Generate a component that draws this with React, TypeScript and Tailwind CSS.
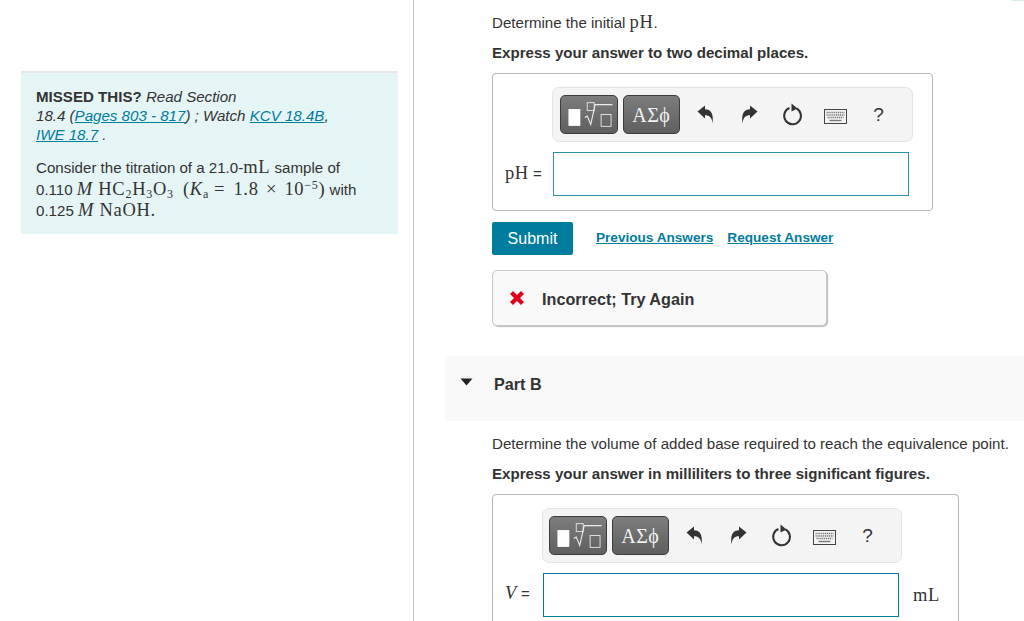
const sans = "font-['Liberation_Sans',Arial,sans-serif]";
const serif = "font-['Liberation_Serif','Times_New_Roman',serif]";

const TemplatesIcon = () => (
  <svg width="56" height="37" viewBox="0 0 56 37" fill="none">
    <rect x="7.5" y="13" width="12" height="17" fill="#fff" />
    <rect x="26.5" y="6.5" width="7" height="8" stroke="#dcdcdc" />
    <path d="M24 21.5l2.5 -1.5 3.5 8.5 4.5-20h17.5" stroke="#ededed" strokeWidth="1.1" />
    <rect x="40.5" y="18.5" width="10" height="12" stroke="#dcdcdc" />
  </svg>
);

const UndoIcon = ({ flip = false }: { flip?: boolean }) => (
  <svg width="17" height="19" viewBox="0 0 17 19" className={flip ? "-scale-x-100" : ""}>
    <path
      d="M0.5 6.5L8 0.5V4.2C13.5 4.2 17 8 15.5 18.5C15 12.5 12.5 10.2 8 10.2V13.5Z"
      fill="#333"
    />
  </svg>
);

const ResetIcon = () => (
  <svg width="21" height="23" viewBox="0 0 21 23" fill="none">
    <path d="M7.5 5A8.4 8.4 0 1 0 14.5 5.4" stroke="#333" strokeWidth="2" />
    <path d="M9.5 0.5L15.5 5.5L9.5 8.5Z" fill="#333" />
  </svg>
);

const KeyboardIcon = () => (
  <svg width="23" height="15" viewBox="0 0 23 15" fill="none">
    <rect x="0.5" y="0.5" width="22" height="14" fill="#f4f4f4" stroke="#444" />
    <path d="M2.5 3.5h18M2.5 6h18M3.5 8.5h16" stroke="#777" strokeWidth="1.4" strokeDasharray="1.2 0.7" />
    <path d="M5.5 11.5h12" stroke="#777" strokeWidth="1.4" />
  </svg>
);

const ToolButton = ({ children }: { children: React.ReactNode }) => (
  <div className="flex h-[39px] w-[57.5px] items-center justify-center rounded-[5px] border border-[#3c3c3c] bg-gradient-to-b from-[#7d7d7d] to-[#5f5f5f]">
    {children}
  </div>
);

const Toolbar = ({ compact = false }: { compact?: boolean }) => (
  <div
    className={`flex h-[55px] items-center rounded-[7px] border border-[#e4e4e4] bg-[#f4f4f4] ${
      compact ? "w-[360px] pl-[6px]" : "w-[361px] pl-[7px]"
    }`}
  >
    <ToolButton>
      <TemplatesIcon />
    </ToolButton>
    <div className="w-[5px]" />
    <ToolButton>
      <span className={`${serif} text-[20px] tracking-[0.5px] text-[#f2f2f2]`}>ΑΣϕ</span>
    </ToolButton>
    <div className="flex w-[43px] translate-x-[4px] justify-center">
      <UndoIcon />
    </div>
    <div className="flex w-[43px] translate-x-[5px] justify-center">
      <UndoIcon flip />
    </div>
    <div className="flex w-[43px] translate-x-[5px] justify-center">
      <ResetIcon />
    </div>
    <div className="flex w-[43px] translate-x-[5px] justify-center pt-1">
      <KeyboardIcon />
    </div>
    <div className={`flex w-[43px] translate-x-[5px] justify-center text-[19px] text-[#333] ${sans}`}>?</div>
  </div>
);

const AnswerLabel = ({ children }: { children: React.ReactNode }) => (
  <span className={`${serif} text-[18.5px] tracking-[0.6px] text-[#333]`}>{children}</span>
);

const A = ({ children, bold = false }: { children: React.ReactNode; bold?: boolean }) => (
  <a className={`text-[#007c9d] underline ${bold ? "font-bold" : ""}`}>{children}</a>
);

const M = ({ children }: { children: React.ReactNode }) => (
  <span className={`${serif} text-[18.5px] tracking-[0.7px]`}>{children}</span>
);

export default function App() {
  return (
    <div className={`relative flex h-[621px] w-[1024px] overflow-hidden bg-white text-[15.1px] text-[#333] ${sans}`}>
      <div className="absolute right-0 top-0 h-px w-[12px] bg-[#d6ecef]" />
      <aside className="h-full w-[414px] shrink-0 border-r border-[#c7c7c7] pl-[21px] pt-[71px]">
        <div className="h-[163px] w-[377px] border-t-2 border-[#e6e6e6] bg-[#e5f5f6] px-[15px] pt-[14px] leading-[19px]">
          <p>
            <b>MISSED THIS?</b>{" "}
            <i>
              Read Section
              <br />
              18.4 (<A>Pages 803 - 817</A>) ; Watch <A>KCV 18.4B</A>,
              <br />
              <A>IWE 18.7</A> .
            </i>
          </p>
          <p className="mt-[13px] whitespace-nowrap leading-[20.5px]">
            Consider the titration of a 21.0-<M>mL</M> sample of
            <br />
            0.110{" "}
            <M>
              <i>M</i> HC<sub className="text-[12px]">2</sub>H<sub className="text-[12px]">3</sub>O
              <sub className="text-[12px]">3</sub> <span className="ml-[4px]">(</span>
              <i>K</i>
              <sub className="text-[12px]">a</sub>
              <span className="ml-[5px] mr-[3px]">=</span> 1.8 <span className="mx-[2px]">×</span> 10
              <sup className="text-[12px]">−5</sup>)
            </M>{" "}
            with
            <br />
            0.125 <M><i>M</i> NaOH.</M>
          </p>
        </div>
      </aside>

      <main className="min-w-0 flex-1 pl-[31px]">
        <div className="pl-[47px] pt-[12px] leading-[20px]">
          <p>
            Determine the initial <M>pH</M>.
          </p>
          <p className="mt-[10px] font-bold">Express your answer to two decimal places.</p>

          <div className="mt-[10px] h-[138px] w-[441px] rounded-[4px] border border-[#b5b5b5] pl-[59px] pt-[13px]">
            <Toolbar />
            <div className="relative mt-[10px] flex items-center">
              <div className="absolute -left-[47px] top-[11px]">
                <AnswerLabel>pH</AnswerLabel> <span className="text-[15px]">=</span>
              </div>
              <div className="ml-px h-[44px] w-[356px] border border-[#2b93ab] bg-white" />
            </div>
          </div>

          <div className="mt-[11px] flex items-center">
            <button className="h-[33px] w-[81px] rounded-[2px] bg-[#007c9d] text-[16px] text-white">Submit</button>
            <div className="-mt-px ml-[23px] flex gap-[14px] text-[13.6px]">
              <A bold>Previous Answers</A>
              <A bold>Request Answer</A>
            </div>
          </div>

          <div className="mt-[15px] flex h-[56px] w-[335px] items-center rounded-[5px] border border-[#c8c8c8] bg-[#f9f9f9] pl-[16px] shadow-[1px_1px_1px_#bbb]">
            <svg width="16" height="16" viewBox="0 0 16 16">
              <path d="M1 4L4 1L8 5L12 1L15 4L11 8L15 12L12 15L8 11L4 15L1 12L5 8Z" fill="#e0001b" />
            </svg>
            <span className="ml-[17px] pt-px text-[16.2px] font-bold">Incorrect; Try Again</span>
          </div>
        </div>

        <div className="mt-[30px] flex h-[65px] items-start bg-[#f9f9f9] pl-[15px] pt-[19px]">
          <svg width="13" height="8" viewBox="0 0 13 8" className="mt-[3px]">
            <path d="M0.5 0.5H12.5L6.5 7.5Z" fill="#222" />
          </svg>
          <span className="ml-[21px] text-[16.2px] font-bold leading-[18px]">Part B</span>
        </div>

        <div className="pl-[47px] pt-[13px] leading-[20px]">
          <p className="whitespace-nowrap">Determine the volume of added base required to reach the equivalence point.</p>
          <p className="mt-[10px] font-bold">Express your answer in milliliters to three significant figures.</p>

          <div className="mt-[10px] h-[160px] w-[467px] rounded-[4px] border border-[#b5b5b5] pl-[49px] pt-[13px]">
            <Toolbar compact />
            <div className="relative mt-[10px] flex items-center">
              <div className="absolute -left-[37px] top-[10px]">
                <AnswerLabel><i>V</i></AnswerLabel> <span className="text-[15px]">=</span>
              </div>
              <div className="ml-px h-[44px] w-[356px] border border-[#007c9d] bg-white" />
              <span className="ml-[14px]"><AnswerLabel>mL</AnswerLabel></span>
            </div>
          </div>
        </div>
      </main>
    </div>
  );
}
